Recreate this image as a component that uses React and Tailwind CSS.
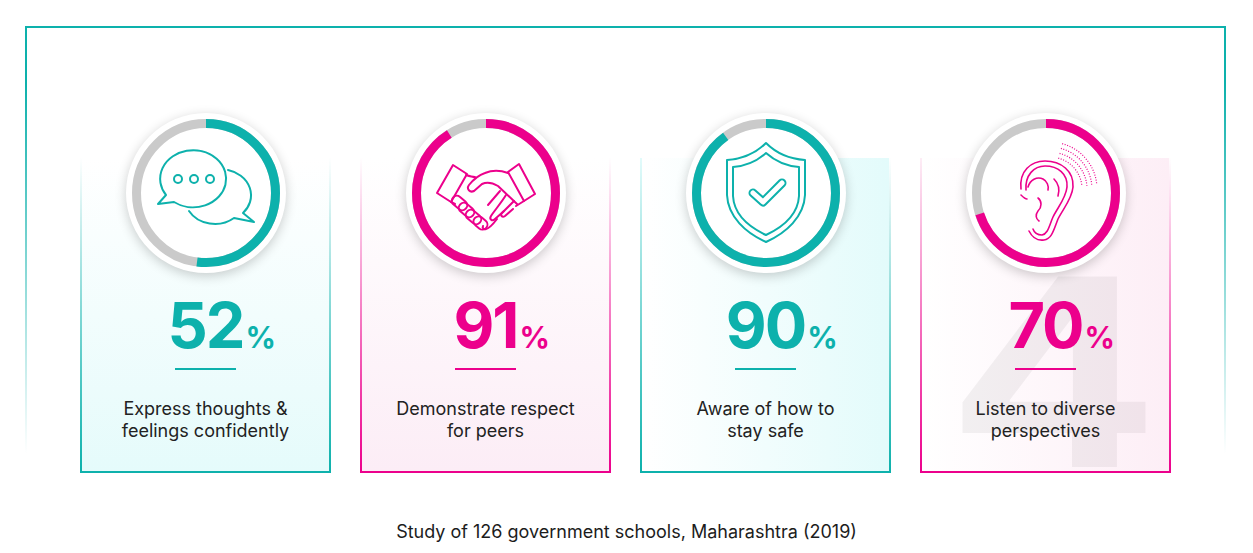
import React from 'react'

const TEAL = '#0db1ac'
const PINK = '#ec008c'

const ChatIcon = ({ color }) => (
  <g fill="none" stroke={color} strokeWidth="2" strokeLinejoin="round" strokeLinecap="round">
    <path d="M48 89 A33 28.5 0 1 0 40 82 L32 91 Z" />
    <circle cx="52" cy="66" r="4" />
    <circle cx="68" cy="66" r="4" />
    <circle cx="84" cy="66" r="4" />
    <path d="M102 57 A30 26 0 0 1 117 100 L128 109 L108 105 A30 26 0 0 1 63 98" />
  </g>
)

const HandshakeIcon = ({ color }) => (
  <g fill="none" stroke={color} strokeWidth="2" strokeLinejoin="round" strokeLinecap="round">
    {/* cuffs */}
    <path d="M47 52 L61 61 L45 89 L31 80 Z" />
    <path d="M102 59 L113 51 L129 81 L118 88 Z" />
    {/* right hand, top + thumb */}
    <path d="M102 60 C94 57 86 57 79 60 C73 62 67 67 63 72 C60 76 64 80 68 78 L76 71 C82 68 87 70 92 73 L111 91" />
    {/* left hand top */}
    <path d="M60 62 C63 63 66 64 69 64" />
    {/* right hand bottom + fingers */}
    <path d="M118 88 L110 93" />
    <path d="M108 88 C104 92 100 96 96 100 C94 102 96 105 99 103 L107 96" />
    <path d="M100 82 C95 90 89 97 85 103 C83 106 86 109 89 106 L98 98" />
    <path d="M94 78 L82 92" />
    <path d="M91 106 C88 110 84 115 80 116 C78 117 76 115 77 113" />
    {/* left hand bottom */}
    <path d="M45 89 L49 91" />
    {/* left fingers */}
    <rect x="45" y="85" width="17" height="10" rx="5" transform="rotate(40 53.5 90)" />
    <rect x="52" y="92" width="17" height="10" rx="5" transform="rotate(40 60.5 97)" />
    <rect x="59" y="99" width="17" height="10" rx="5" transform="rotate(40 67.5 104)" />
    <rect x="67" y="105" width="15" height="10" rx="5" transform="rotate(40 74.5 110)" />
  </g>
)

const ShieldIcon = ({ color }) => (
  <g fill="none" stroke={color} strokeLinejoin="round" strokeLinecap="round">
    <path strokeWidth="2" d="M80 30 C70 40 56 46 41 47 L41 82 C42 104 60 120 80 129 C100 120 118 104 119 82 L119 47 C104 46 90 40 80 30 Z" />
    <path strokeWidth="2" d="M80 40 C71 48 60 53 47 54 L47 83 C48 101 63 114 80 122 C97 114 112 101 113 83 L113 54 C100 53 89 48 80 40 Z" />
    <path strokeWidth="9" d="M67 80 L77 89 L96 70" />
    <path strokeWidth="5" stroke="#fff" d="M67 80 L77 89 L96 70" />
  </g>
)

const arc = (r, a0, a1) => {
  const cx = 84
  const cy = 76
  const p = (a) => [cx + r * Math.cos((a * Math.PI) / 180), cy + r * Math.sin((a * Math.PI) / 180)]
  const [x0, y0] = p(a0)
  const [x1, y1] = p(a1)
  return `M${x0.toFixed(1)} ${y0.toFixed(1)} A${r} ${r} 0 0 1 ${x1.toFixed(1)} ${y1.toFixed(1)}`
}

const EarIcon = ({ color }) => (
  <g fill="none" stroke={color} strokeLinecap="round" strokeLinejoin="round">
    <g strokeWidth="1.6">
      <path d="M55 76 C53 58 65 48 79 48 C95 48 108 58 107 74 C106 86 97 96 92 106 C88 116 86 126 78 127 C71 128 66 124 63 118" />
      <path d="M60 77 C59 62 68 53 79 53 C92 53 102 61 101 74 C100 85 92 94 87 104 C83 113 82 121 76 122 C71 122 68 119 67 116" />
      <path d="M62 74 C64 67 71 63 77 66 C81 68 83 73 82 77" />
      <path d="M72 85 C76 88 76 94 72 98 C69 102 70 106 73 108" />
      <path d="M88 66 C92 70 94 76 92 83" />
      <path d="M55 82 C57 84 59 86 61 86" />
    </g>
    <g strokeWidth="1.2" strokeDasharray="1 1.6" strokeLinecap="butt">
      <path d={arc(32, -75, -5)} />
      <path d={arc(37, -75, -5)} />
      <path d={arc(42, -75, -5)} />
      <path d={arc(47, -75, -5)} />
    </g>
  </g>
)

const cards = [
  {
    value: '52',
    pct: 52,
    color: TEAL,
    lines: ['Express thoughts &', 'feelings confidently'],
    Icon: ChatIcon,
    box: 'bg-linear-to-b from-white to-[#e5fbfb] [border-image:linear-gradient(to_bottom,rgba(13,177,172,0),#0db1ac)_1]',
    num: 'text-[#0db1ac]',
    bar: 'bg-[#0db1ac]',
  },
  {
    value: '91',
    pct: 91,
    color: PINK,
    lines: ['Demonstrate respect', 'for peers'],
    Icon: HandshakeIcon,
    box: 'bg-linear-to-b from-white to-[#fcedf6] [border-image:linear-gradient(to_bottom,rgba(236,0,140,0),#ec008c)_1]',
    num: 'text-[#ec008c]',
    bar: 'bg-[#ec008c]',
  },
  {
    value: '90',
    pct: 90,
    color: TEAL,
    lines: ['Aware of how to', 'stay safe'],
    Icon: ShieldIcon,
    box: 'bg-linear-to-r from-white to-[#e3fbfb] [border-image:linear-gradient(to_bottom,rgba(13,177,172,0),#0db1ac)_1]',
    num: 'text-[#0db1ac]',
    bar: 'bg-[#0db1ac]',
  },
  {
    value: '70',
    pct: 70,
    color: PINK,
    lines: ['Listen to diverse', 'perspectives'],
    Icon: EarIcon,
    box: 'bg-linear-to-r from-white to-[#fdeef6] [border-image:linear-gradient(to_bottom,rgba(236,0,140,0),#ec008c)_1]',
    num: 'text-[#ec008c]',
    bar: 'bg-[#ec008c]',
    mark: '4',
  },
]

const Ring = ({ pct, color, children }) => {
  const r = 69.5
  const c = 2 * Math.PI * r
  return (
    <div className="relative -mt-[45px] h-40 w-40 shrink-0 rounded-full bg-white shadow-[0_3px_12px_rgba(0,0,0,0.2)]">
      <svg viewBox="0 0 160 160" className="h-40 w-40">
        <circle cx="80" cy="80" r={r} fill="none" stroke="#cacaca" strokeWidth="9" />
        <circle
          cx="80"
          cy="80"
          r={r}
          fill="none"
          stroke={color}
          strokeWidth="9"
          strokeDasharray={`${(c * pct) / 100} ${c}`}
          transform="rotate(-90 80 80)"
        />
        {children}
      </svg>
    </div>
  )
}

const StatCard = ({ card }) => {
  const { Icon } = card
  return (
    <div className={`relative flex h-[315px] w-[251px] flex-col items-center border-x-2 border-b-2 ${card.box}`}>
      {/* big faded number behind the content */}
      {card.mark && (
        <div aria-hidden="true" className="pointer-events-none absolute inset-0 select-none overflow-hidden">
          <span className="absolute left-[25px] top-[83px] origin-left scale-x-[1.2] text-[262px] font-bold leading-none text-black/[0.05]">
            {card.mark}
          </span>
        </div>
      )}
      <Ring pct={card.pct} color={card.color}>
        <Icon color={card.color} />
      </Ring>

      <div className={`relative mt-[21px] flex items-baseline font-bold leading-none ${card.num}`}>
        <span className="text-[63px] tracking-[-2px]">{card.value}</span>
        <span className="w-0 overflow-visible whitespace-nowrap text-[30px]">
          <span className="ml-[2px]">%</span>
        </span>
      </div>

      <div className={`relative mt-[11px] h-[2px] w-[61px] ${card.bar}`}></div>

      <p className="relative mt-[28px] text-center text-[18px] leading-[22px] text-[#222]">
        {card.lines[0]}
        <br />
        {card.lines[1]}
      </p>
    </div>
  )
}

export default function App() {
  return (
    <div className="min-h-[553px] w-[1253px] bg-white pt-[26px] font-['Inter',sans-serif]">
      {/* Outer frame */}
      <div className="ml-[25px] w-[1201px] border-x-2 border-t-2 pb-[17px] pt-[130px] [border-image:linear-gradient(to_bottom,#0db1ac_0%,#0db1ac_12%,rgba(13,177,172,0)_92%)_1]">
        <div className="flex justify-center gap-[29px]">
          {cards.map((card) => (
            <StatCard key={card.value} card={card} />
          ))}
        </div>
      </div>

      <p className="mt-[28px] text-center text-[18px] leading-[28px] text-[#1c1c1c]">
        Study of 126 government schools, Maharashtra (2019)
      </p>
    </div>
  )
}
